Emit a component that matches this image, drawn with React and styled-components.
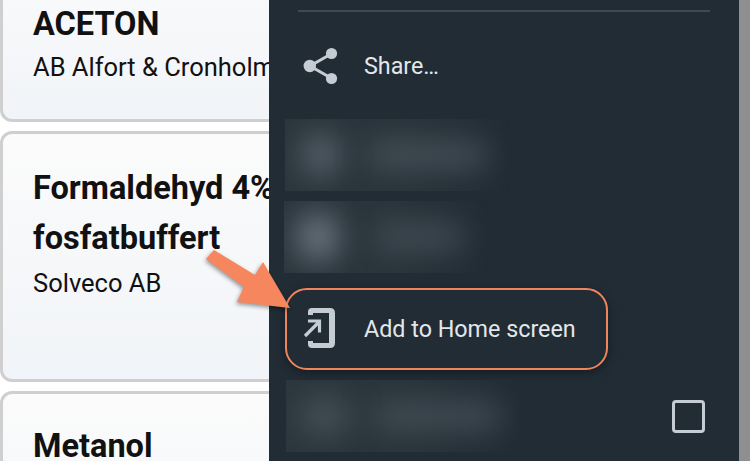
import styled, { createGlobalStyle } from 'styled-components';

const GlobalStyle = createGlobalStyle`
  html, body {
    margin: 0;
    padding: 0;
    background: #ffffff;
  }
`;

const Screen = styled.div`
  position: relative;
  width: 750px;
  height: 461px;
  overflow: hidden;
  display: flex;
  font-family: Roboto, "Liberation Sans", sans-serif;
`;

const CardList = styled.div`
  width: 269px;
  flex: none;
  overflow: hidden;
  display: flex;
  flex-direction: column;
  gap: 9px;
  margin-top: -60px;
`;

const Card = styled.div`
  width: 400px;
  height: ${(p) => p.$height}px;
  flex: none;
  box-sizing: border-box;
  padding: ${(p) => p.$top}px 0 0 30px;
  border: 3px solid #cfcfcf;
  border-radius: 12px;
  background: linear-gradient(180deg, #fbfbfb, #f1f4f8);
  color: #111;
`;

const Name = styled.div`
  font-size: 32.5px;
  font-weight: 700;
  line-height: 50px;
  white-space: nowrap;
`;

const Company = styled.div`
  font-size: 25.5px;
  line-height: 36px;
  margin-top: ${(p) => p.$gap || 0}px;
  white-space: nowrap;
`;

const Menu = styled.div`
  width: 470px;
  flex: none;
  background: #212c35;
  box-sizing: border-box;
  padding: 10px 0 0 15px;
  display: flex;
  flex-direction: column;
`;

const Divider = styled.div`
  height: 2px;
  margin: 0 29px 0 14px;
  background: #414a50;
`;

const Row = styled.div`
  display: flex;
  align-items: center;
  height: 72px;
  margin-top: 18px;
  padding-left: 19px;
  color: #e4e7ea;
  font-size: 23.3px;
`;

const IconSlot = styled.div`
  width: 61px;
  flex: none;
  display: flex;
`;

const Blurred = styled.div`
  height: 72px;
  flex: none;
  width: ${(p) => p.$width}px;
  margin: ${(p) => p.$margin};
  overflow: hidden;
  background: linear-gradient(90deg, #2b363d 0%, #29343b 55%, #212c35 100%);
  display: flex;
  align-items: center;
`;

const Smear = styled.div`
  flex: none;
  width: ${(p) => p.$width}px;
  height: ${(p) => p.$height}px;
  margin-left: ${(p) => p.$left}px;
  background: ${(p) => p.$color};
  border-radius: 20px;
  filter: blur(15px);
`;

const Highlight = styled.div`
  display: flex;
  align-items: center;
  box-sizing: border-box;
  width: 323px;
  height: 82px;
  margin: 15px 0 0 1px;
  padding-left: 16px;
  border: 2px solid #f0845c;
  border-radius: 22px;
  background: #212c35;
  box-shadow: 0 3px 10px rgba(0, 0, 0, 0.35);
  color: #e4e7ea;
  font-size: 23.3px;
`;

const LastRow = styled.div`
  display: flex;
  align-items: center;
  justify-content: space-between;
  margin-top: 10px;
  padding-right: 34px;
`;

const Check = styled.div`
  width: 33px;
  height: 33px;
  box-sizing: border-box;
  border: 3px solid #c6ccd4;
  border-radius: 4px;
`;

const Edge = styled.div`
  flex: 1;
  background: #8f8f8f;
`;

const Arrow = styled.svg`
  position: absolute;
  left: 200px;
  top: 245px;
  filter: drop-shadow(-1px 2px 2px rgba(0, 0, 0, 0.4));
`;

const ShareIcon = () => (
  <svg width="36" height="38" viewBox="0 0 36 38" fill="#c6ccd4" stroke="#c6ccd4">
    <path d="M28 7 L7 19 L28 31" fill="none" strokeWidth="3" />
    <circle cx="28.5" cy="6.5" r="5.6" stroke="none" />
    <circle cx="6.8" cy="19" r="6.2" stroke="none" />
    <circle cx="28.5" cy="31.5" r="5.6" stroke="none" />
  </svg>
);

const AddHomeIcon = () => (
  <svg width="32" height="42" viewBox="0 0 32 42">
    <path
      d="M5 4 Q5 0 9 0 H27 Q32 0 32 5 V35 Q32 40 27 40 H9 Q5 40 5 36 V33 H10 V35 H26 V5 H10 V7 H5 Z"
      fill="#c6ccd4"
    />
    <path d="M2 28 L15 15 M5 13 H16.5 V24.5" fill="none" stroke="#c6ccd4" strokeWidth="3.2" />
  </svg>
);

const App = () => {
  return (
    <Screen>
      <GlobalStyle />
      <CardList>
        <Card $height={182} $top={56}>
          <Name>ACETON</Name>
          <Company>AB Alfort &amp; Cronholm</Company>
        </Card>
        <Card $height={251} $top={29}>
          <Name>Formaldehyd 4%</Name>
          <Name>fosfatbuffert</Name>
          <Company $gap={2}>Solveco AB</Company>
        </Card>
        <Card $height={200} $top={27}>
          <Name>Metanol</Name>
        </Card>
      </CardList>
      <Menu>
        <Divider />
        <Row>
          <IconSlot><ShareIcon /></IconSlot>
          Share…
        </Row>
        <Blurred $width={225} $margin="17px 0 0 1px">
          <Smear $width={36} $height={40} $left={18} $color="#5d6770" />
          <Smear $width={120} $height={22} $left={28} $color="#4a555d" />
        </Blurred>
        <Blurred $width={205} $margin="10px 0 0 0">
          <Smear $width={40} $height={48} $left={14} $color="#6e7882" />
          <Smear $width={90} $height={22} $left={36} $color="#465159" />
        </Blurred>
        <Highlight>
          <IconSlot><AddHomeIcon /></IconSlot>
          Add to Home screen
        </Highlight>
        <LastRow>
          <Blurred $width={235} $margin="0 0 0 2px">
            <Smear $width={50} $height={36} $left={14} $color="#475159" />
            <Smear $width={130} $height={22} $left={22} $color="#47525a" />
          </Blurred>
          <Check />
        </LastRow>
      </Menu>
      <Edge />
      <Arrow width="100" height="90" viewBox="0 0 100 90">
        <path d="M6 14 L14 5 L55 30 L63 17 L90 63 L37 57 L44 42 Z" fill="#f6865e" />
      </Arrow>
    </Screen>
  );
};

export default App;
